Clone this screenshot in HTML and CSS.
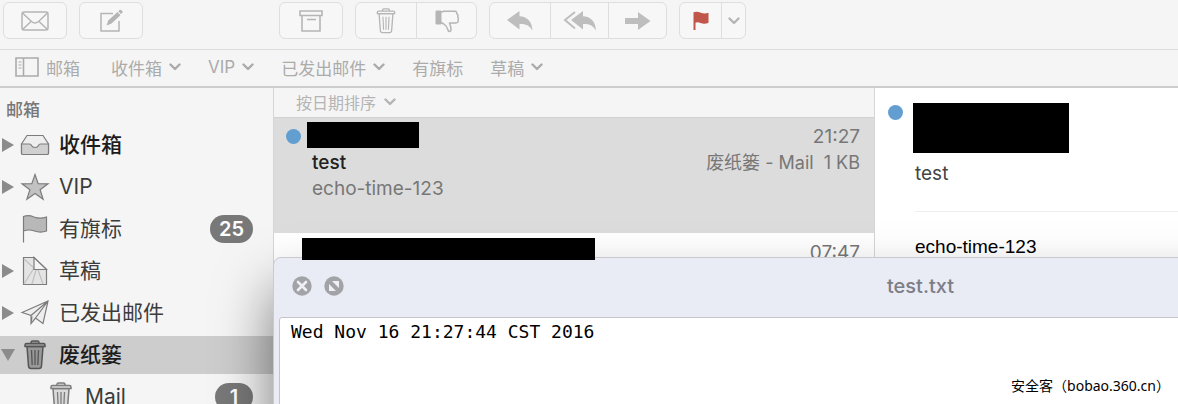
FILE: index.html
```html
<!DOCTYPE html>
<html lang="zh-CN">
<head>
    <meta charset="UTF-8">
    <meta name="viewport" content="width=device-width, initial-scale=1.0">
    <title>邮箱</title>
    <link rel="stylesheet" href="styles.css">
</head>
<body>
    <!-- shared shapes -->
    <svg class="defs" aria-hidden="true">
        <symbol id="chevron" viewBox="0 0 12 8"><path d="M1.500 1.500L6 6l4.500-4.500" fill="none" stroke="currentColor" stroke-width="2.400" stroke-linecap="round" stroke-linejoin="round"/></symbol>
        <symbol id="bin" viewBox="0 0 24 30">
            <path d="M4 6.500h16l-1.500 19.500q-.2 2.500-2.500 2.500H8q-2.300 0-2.500-2.500z" stroke-width="1.500"/>
            <path d="M8 4V2.500Q8 1 9.500 1h5Q16 1 16 2.500V4M2 6.500V5q0-1.500 1.500-1.500h17Q22 3.500 22 5v1.500z" stroke-width="1.500"/>
            <path d="M8.500 10l.7 15M12 10v15M15.500 10l-.7 15" fill="none" stroke-width="1.300"/>
        </symbol>
    </svg>
    <div class="app">
        <header class="toolbar">
            <div class="btn-group"><button type="button" aria-label="收取邮件">
                <svg width="28" height="20" viewBox="0 0 28 20" fill="none" stroke="currentColor" stroke-width="1.500"><rect x="1" y="1" width="26" height="18" rx="2"/><path d="M1.500 2l9 8.500q3.500 3 7 0L26.500 2M1.500 18.500l8.500-8M26.500 18.500l-8.500-8"/></svg>
            </button></div>
            <div class="btn-group"><button type="button" aria-label="新邮件">
                <svg width="24" height="24" viewBox="0 0 24 24"><path d="M14 4.500H2V22h18V12" fill="none" stroke="currentColor" stroke-width="1.500"/><path d="M7.500 16.500l1.700-5L18.500 3l3 3.200-9.300 8.500zM19.300 2.200l1.200-1.100q1-.8 1.900.1l.8.800q.9 1-.1 1.900l-1.200 1.100z" fill="currentColor"/></svg>
            </button></div>
            <div class="btn-group archive"><button type="button" aria-label="归档">
                <svg width="24" height="22" viewBox="0 0 24 22" fill="none" stroke="currentColor" stroke-width="1.600"><path d="M1 1h22v4.500H1zM3 5.500V21h18V5.500M8 9.500h9"/></svg>
            </button></div>
            <div class="btn-group">
                <button type="button" aria-label="删除"><svg width="22" height="26" fill="none" stroke="currentColor"><use href="#bin"/></svg></button>
                <button type="button" aria-label="垃圾邮件">
                    <svg width="26" height="24" viewBox="0 0 26 24"><path d="M2 2h5v13H2z" fill="currentColor" stroke="currentColor"/><path d="M7 3l3-.8h11q2 .2 1.700 2.500 1.800.9 1 3 1.300 1.200.4 3 .6 3.300-2.300 3.300h-6.300q1.500 4 1.500 6.500 0 2-1.700 2-1 0-1.500-2-1-3.500-4-5.500l-2.800-1.500" fill="none" stroke="currentColor" stroke-width="1.500" stroke-linejoin="round"/></svg>
                </button>
            </div>
            <div class="btn-group reply-group">
                <button type="button" aria-label="回复"><svg width="26" height="20" viewBox="0 0 26 20" fill="currentColor"><path d="M0 9L12.500 0v5.200C20 5.500 25 10 25.500 19.500 22 14 18.500 12.800 12.500 13v5.500z"/></svg></button>
                <button type="button" aria-label="回复全部"><svg width="34" height="20" viewBox="0 0 34 20" fill="currentColor"><path d="M8 9l12-9v5.200C27.500 5.500 32.500 10 33 19.500 29.500 14 26 12.800 20 13v5.500z"/><path d="M12 1L2 9l10 8.500" fill="none" stroke="currentColor" stroke-width="2"/></svg></button>
                <button type="button" aria-label="转发"><svg width="26" height="18" viewBox="0 0 26 18" fill="currentColor"><path d="M0 6h13V0l12.500 9L13 18v-6H0z"/></svg></button>
            </div>
            <div class="btn-group flag-group">
                <button type="button" class="flag" aria-label="旗标"><svg width="16" height="20" viewBox="0 0 16 20" fill="currentColor"><path d="M.5 1.200Q4 0 8 1.800q3.500 1.400 7.500 0v10q-4 1.600-8 .2-3-1.300-5-.3V19h-2z"/></svg></button>
                <button type="button" class="more" aria-label="旗标选项"><svg class="chev"><use href="#chevron"/></svg></button>
            </div>
        </header>

        <nav class="favorites">
            <button type="button" class="toggle"><svg width="24" height="20" viewBox="0 0 24 20" fill="none" stroke="currentColor" stroke-width="1.600"><path d="M1 1h22v18H1zM8.500 1v18"/><path d="M3.500 5h3M3.500 8h3M3.500 11h3" stroke-width="1.200"/></svg>邮箱</button>
            <button type="button">收件箱<svg class="chev"><use href="#chevron"/></svg></button>
            <button type="button">VIP<svg class="chev"><use href="#chevron"/></svg></button>
            <button type="button">已发出邮件<svg class="chev"><use href="#chevron"/></svg></button>
            <button type="button">有旗标</button>
            <button type="button">草稿<svg class="chev"><use href="#chevron"/></svg></button>
        </nav>

        <div class="panes">
            <nav class="sidebar">
                <h2>邮箱</h2>
                <a href="#inbox" class="row strong">
                    <i class="arrow"></i>
                    <svg class="icon" viewBox="0 0 30 30"><path d="M1.500 14L7 5.500h16L28.500 14v9q0 1.500-1.500 1.500H3q-1.500 0-1.500-1.500z" fill="#eee"/><path d="M1.500 14h8q1.500 0 2 1.500 1 2 3.500 2t3.500-2q.5-1.500 2-1.500h8v9q0 1.500-1.500 1.500H3q-1.500 0-1.500-1.500z" fill="#d0d0d0"/></svg>
                    <span>收件箱</span>
                </a>
                <a href="#vip" class="row">
                    <i class="arrow"></i>
                    <svg class="icon" viewBox="0 0 30 30"><path d="M15 2.500l3.200 9.200 9.800.1-7.900 5.900 3 9.500-8.100-5.800-8.100 5.800 3-9.500L2 11.800l9.800-.1z" fill="#c2c2c2"/></svg>
                    <span>VIP</span>
                </a>
                <a href="#flagged" class="row">
                    <i class="arrow none"></i>
                    <svg class="icon" viewBox="0 0 30 30"><path d="M3.500 28.500V2.500q5-1.800 10.500.5 6 2.300 12.500 0v14q-6 2.200-12 0-5.500-2-11 0" fill="#b8b8b8"/></svg>
                    <span>有旗标</span>
                    <b class="badge">25</b>
                </a>
                <a href="#drafts" class="row">
                    <i class="arrow"></i>
                    <svg class="icon" viewBox="0 0 30 30"><path d="M3.500 1.500H14l12.500 12v15h-23z" fill="#e4e4e4"/><path d="M14 12L4 28M16 14l-4 14M18 14l5 14M14 12L4 3" stroke="#c0c0c0"/><path d="M14 1.500v12h12.500z" fill="#f4f4f4"/></svg>
                    <span>草稿</span>
                </a>
                <a href="#sent" class="row">
                    <i class="arrow"></i>
                    <svg class="icon" viewBox="0 0 30 30"><path d="M2 14.500L28 3l-5 22.500-7.500-5.500-4.500 5.500v-8zM11 17.500L28 3 15.500 20M11 25.500l1-7" fill="#eee"/></svg>
                    <span>已发出邮件</span>
                </a>
                <a href="#trash" class="row strong selected">
                    <i class="arrow open"></i>
                    <svg class="icon bin dark"><use href="#bin"/></svg>
                    <span>废纸篓</span>
                </a>
                <a href="#trash-mail" class="row child">
                    <svg class="icon bin"><use href="#bin"/></svg>
                    <span>Mail</span>
                    <b class="badge">1</b>
                </a>
            </nav>

            <section class="list">
                <button type="button" class="sort">按日期排序<svg class="chev"><use href="#chevron"/></svg></button>
                <article class="message selected">
                    <i class="dot"></i>
                    <div class="body">
                        <div class="line"><span class="redacted sender"></span><time>21:27</time></div>
                        <div class="line"><span class="subject">test</span><span class="meta">废纸篓 - Mail&nbsp; 1 KB</span></div>
                        <div class="line preview">echo-time-123</div>
                    </div>
                </article>
                <article class="message">
                    <span class="redacted sender-long"></span>
                    <time>07:47</time>
                </article>
            </section>

            <main class="detail">
                <i class="dot"></i>
                <div class="mail">
                    <div class="redacted from"></div>
                    <div class="title">test</div>
                    <p>echo-time-123</p>
                </div>
            </main>
        </div>

        <section class="quicklook">
            <div class="titlebar">
                <div class="controls">
                    <button type="button" aria-label="关闭"><svg width="20" height="20" viewBox="0 0 20 20"><circle cx="10" cy="10" r="9.700" fill="#a2a3a7"/><path d="M6 6l8 8M14 6l-8 8" stroke="#eef0f6" stroke-width="2.600" stroke-linecap="round"/></svg></button>
                    <button type="button" aria-label="全屏"><svg width="20" height="20" viewBox="0 0 20 20"><circle cx="10" cy="10" r="9.700" fill="#a2a3a7"/><path d="M8 5h7v7zM5 8l7 7H5z" fill="#eef0f6"/></svg></button>
                </div>
                <h1>test.txt</h1>
            </div>
            <textarea aria-label="test.txt" readonly>Wed Nov 16 21:27:44 CST 2016</textarea>
        </section>
        <div class="watermark">安全客（bobao.360.cn）</div>
    </div>
</body>
</html>
```
FILE: styles.css
```css
*{
    margin: 0;
    padding: 0;
    box-sizing: border-box;
}

body{
    font-family: Inter, "Noto Sans CJK SC", sans-serif;
    font-size: 19px;
    color: #3c3c3c;
}

button{
    border: 0;
    background: none;
    font: inherit;
    color: inherit;
}

svg{
    display: block;
    flex-shrink: 0;
}

.defs{
    position: absolute;
    width: 0;
    height: 0;
}

.chev{
    width: 12px;
    height: 8px;
}

.app{
    position: relative;
    display: flex;
    flex-direction: column;
    height: 100vh;
    overflow: hidden;
    background: #f5f5f5;
}

/* toolbar */
.toolbar{
    display: flex;
    gap: 12px;
    height: 50px;
    padding: 2px 3px;
    border-bottom: 1px solid #dcdcdc;
    color: #b5b5b5;
}

.btn-group{
    display: flex;
    height: 37px;
    border: 1px solid #dedede;
    border-radius: 6px;
    background: #f7f7f7;
}

.btn-group button{
    display: flex;
    justify-content: center;
    align-items: center;
    width: 60px;
}

.btn-group button:only-child{
    width: 62px;
}

.btn-group button + button{
    border-left: 1px solid #dedede;
}

.btn-group.archive{
    margin-left: 124px;
}

.reply-group button + button{
    width: 58px;
}

.reply-group{
    color: #bebebe;
}

.btn-group .flag{
    width: 41px;
    color: #c1574b;
}

.btn-group .more{
    width: 24px;
}

/* favorites */
.favorites{
    display: flex;
    align-items: center;
    gap: 27px;
    height: 38px;
    padding: 0 15px 2px;
    border-bottom: 2px solid #cdcdcd;
    font-size: 17px;
    color: #ababab;
}

.favorites button{
    display: flex;
    align-items: center;
    gap: 7px;
    white-space: nowrap;
}

.favorites .toggle{
    margin-right: 4px;
}

/* panes */
.panes{
    display: flex;
    flex: 1;
    min-height: 0;
}

.sidebar{
    display: flex;
    flex-direction: column;
    flex-shrink: 0;
    gap: 4px;
    width: 274px;
    border-right: 1px solid #d6d6d6;
}

.sidebar h2{
    height: 34px;
    padding: 10px 6px 0;
    font-size: 17px;
    font-weight: 500;
    line-height: 24px;
    color: #777;
}

.row{
    display: flex;
    align-items: center;
    flex-shrink: 0;
    height: 38px;
    padding-right: 20px;
    font-size: 21px;
    line-height: 30px;
    color: #3c3c3c;
    text-decoration: none;
}

.row.strong{
    font-weight: 500;
    color: #1c1c1c;
}

.row.selected{
    background: #cdcdcd;
}

.row.child{
    padding-left: 46px;
}

.arrow{
    width: 12px;
    margin: 0 6px 0 2px;
    border: 7px solid transparent;
    border-left: 12px solid #8b8b8b;
    border-right: 0;
}

.arrow.none{
    border-color: transparent;
}

.arrow.open{
    width: 14px;
    margin: 0 5px 0 1px;
    border: 7px solid transparent;
    border-top: 12px solid #8b8b8b;
    border-bottom: 0;
}

.icon{
    width: 30px;
    height: 30px;
    margin-right: 9px;
    fill: none;
    stroke: #7c7c7c;
    stroke-width: 1.2;
}

.icon.bin{
    fill: #dadada;
}

.icon.bin.dark{
    fill: #999;
    stroke: #555;
}

.badge{
    min-width: 38px;
    height: 28px;
    margin-left: auto;
    padding: 0 9px;
    border-radius: 14px;
    background: #787878;
    font-size: 20px;
    font-weight: 600;
    line-height: 28px;
    text-align: center;
    color: #fff;
}

.list{
    width: 601px;
    flex-shrink: 0;
    border-right: 1px solid #d6d6d6;
    background: #fff;
}

.sort{
    display: flex;
    align-items: center;
    gap: 8px;
    width: 100%;
    height: 30px;
    padding: 0 22px 2px;
    border-bottom: 1px solid #d0d0d0;
    background: #f5f5f5;
    font-size: 16px;
    color: #b4b4b4;
}

.message{
    display: flex;
    justify-content: space-between;
    padding: 5px 14px 0 28px;
}

.message.selected{
    height: 115px;
    padding: 4px 14px 0 12px;
    background: #dcdcdc;
}

.dot{
    width: 15px;
    height: 15px;
    flex-shrink: 0;
    border-radius: 50%;
    background: #629fd0;
}

.message .dot{
    margin: 7px 6px 0 0;
}

.message .body{
    flex: 1;
}

.line{
    display: flex;
    justify-content: space-between;
    height: 26px;
    padding-left: 5px;
    line-height: 30px;
}

.line:first-child{
    padding-left: 0;
}

.subject{
    font-weight: 500;
    color: #222;
}

time,
.preview{
    color: #777;
}

.meta{
    font-size: 18px;
    color: #777;
}

.redacted{
    display: block;
    background: #000;
}

.sender{
    width: 112px;
    height: 26px;
}

/* sits above the preview window */
.sender-long{
    position: relative;
    z-index: 2;
    width: 293px;
    height: 22px;
}

.message time{
    line-height: 30px;
}

.detail{
    display: flex;
    flex: 1;
    gap: 10px;
    padding: 15px 0 0 13px;
    background: #fff;
}

.detail .dot{
    margin-top: 2px;
}

.mail{
    flex: 1;
}

.from{
    width: 156px;
    height: 50px;
}

.title{
    height: 59px;
    margin-left: 2px;
    padding-top: 8px;
    border-bottom: 1px solid #eee;
    line-height: 26px;
    color: #444;
}

.mail p{
    margin: 22px 2px 0;
    font-family: "Liberation Sans", Arial, sans-serif;
    font-size: 19px;
    line-height: 26px;
    color: #000;
}

/* floating preview window, runs off the right edge */
.quicklook{
    position: absolute;
    z-index: 1;
    top: 257px;
    right: -384px;
    bottom: -200px;
    left: 273px;
    display: flex;
    flex-direction: column;
    padding-left: 5px;
    border: 1px solid #c9cad0;
    border-radius: 8px;
    background: #e9ebf5;
    box-shadow: 0 32px 56px rgba(0, 0, 0, .5);
}

.titlebar{
    display: grid;
    grid-template-columns: 1fr auto 1fr;
    align-items: center;
    height: 59px;
    padding: 0 12px 4px 13px;
}

.controls{
    display: flex;
    gap: 12px;
}

.titlebar h1{
    font-size: 20px;
    font-weight: 500;
    color: #7c7e86;
}

.quicklook textarea{
    flex: 1;
    padding: 4px 11px;
    border: 1px solid #c4c5cb;
    border-radius: 3px 0 0 0;
    outline: 0;
    background: #fff;
    font-family: "DejaVu Sans Mono", monospace;
    font-size: 18px;
    line-height: 20px;
    color: #000;
    resize: none;
}

.watermark{
    position: absolute;
    z-index: 3;
    right: 8px;
    bottom: 8px;
    font-family: "Noto Sans", "Noto Sans CJK SC", sans-serif;
    font-size: 14px;
    line-height: 20px;
    color: #000;
    text-shadow: 1px 1px 0 #fff, -1px -1px 0 #fff;
}
```
